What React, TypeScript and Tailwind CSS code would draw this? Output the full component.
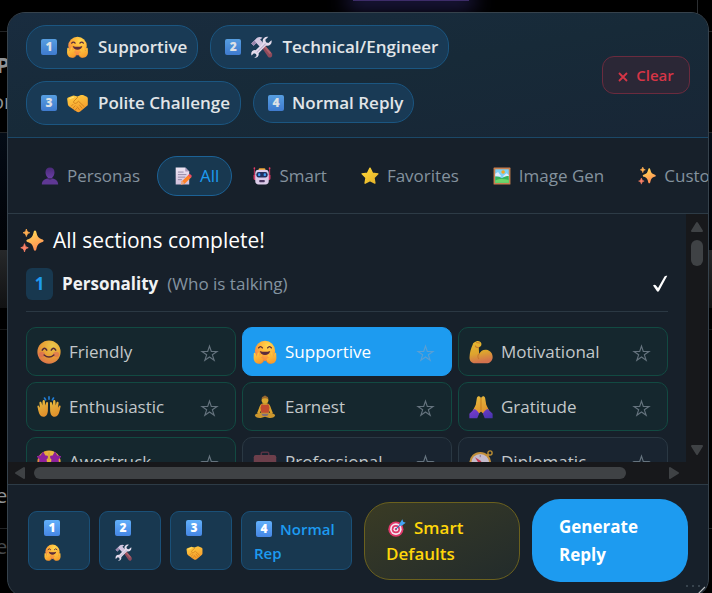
import type { ReactNode } from 'react';

/* ---------- shared gradients for the emoji drawings ---------- */

function Gradients() {
  return (
    <svg width="0" height="0" className="absolute" aria-hidden="true">
      <defs>
        <radialGradient id="face" cx="0.65" cy="0.25" r="0.9">
          <stop offset="0" stopColor="#ffd94f" />
          <stop offset="0.5" stopColor="#ffae35" />
          <stop offset="1" stopColor="#ee6f55" />
        </radialGradient>
        <linearGradient id="hand" x1="0" y1="0" x2="0.4" y2="1">
          <stop offset="0" stopColor="#ffd143" />
          <stop offset="1" stopColor="#f79c2c" />
        </linearGradient>
        <linearGradient id="spark" x1="0.2" y1="0" x2="0.6" y2="1">
          <stop offset="0" stopColor="#ffdd55" />
          <stop offset="1" stopColor="#ff8a55" />
        </linearGradient>
        <linearGradient id="gold" x1="0" y1="0" x2="1" y2="1">
          <stop offset="0" stopColor="#ffd83a" />
          <stop offset="1" stopColor="#e5b127" />
        </linearGradient>
        <linearGradient id="purple" x1="0" y1="0" x2="0" y2="1">
          <stop offset="0" stopColor="#4a2a78" />
          <stop offset="1" stopColor="#6a3fa5" />
        </linearGradient>
        <linearGradient id="sleeve" x1="0" y1="0" x2="1" y2="1">
          <stop offset="0" stopColor="#8a3fe0" />
          <stop offset="1" stopColor="#4b36bd" />
        </linearGradient>
        <linearGradient id="paper" x1="0" y1="0" x2="0" y2="1">
          <stop offset="0" stopColor="#efe6f3" />
          <stop offset="1" stopColor="#cfc0dc" />
        </linearGradient>
        <linearGradient id="skin" x1="0" y1="0" x2="0.2" y2="1">
          <stop offset="0" stopColor="#ffcb30" />
          <stop offset="0.6" stopColor="#f3b22f" />
          <stop offset="1" stopColor="#e87b52" />
        </linearGradient>
      </defs>
    </svg>
  );
}

type IconProps = { className: string };

function Emoji({ className, children }: IconProps & { children: ReactNode }) {
  return (
    <svg viewBox="0 0 32 32" className={`shrink-0 ${className}`} aria-hidden="true">
      {children}
    </svg>
  );
}

function Hugging({ className }: IconProps) {
  return (
    <Emoji className={className}>
      <circle cx="16" cy="14.5" r="13.5" fill="url(#face)" />
      <path d="M7.5 10.5q2.5-3.5 5 0M19.5 10.5q2.5-3.5 5 0" stroke="#5a2b3c" strokeWidth="1.8" fill="none" strokeLinecap="round" />
      <path d="M9 14.5q7 2.5 14 0q-1.500 5.500-7 5.500t-7-5.500z" fill="#5a2b3c" />
      <path d="M1 19c0-2.500 2-2.500 2.600-.8L5 22l1-4c.5-2 2.800-1.400 2.600.5L8.300 21l2-1.500c1.700-1 3 .7 2 2L10.500 24c1.500 0 3.500.5 3.500 3 0 3-3 4.500-6 4.500C3 31.500 1 28 .8 24z" fill="url(#hand)" />
      <path d="M31 19c0-2.500-2-2.500-2.600-.8L27 22l-1-4c-.5-2-2.800-1.400-2.600.5l.3 2.500-2-1.500c-1.700-1-3 .7-2 2l1.800 2.500c-1.500 0-3.500.5-3.500 3 0 3 3 4.500 6 4.500 5 0 7-3.500 7.200-7.500z" fill="url(#hand)" />
      <path d="M14 27c0 3-3 4.500-6 4.500M18 27c0 3 3 4.500 6 4.500" stroke="#e98332" strokeWidth="1" fill="none" />
    </Emoji>
  );
}

function Tools({ className }: IconProps) {
  return (
    <Emoji className={className}>
      <path d="M14 13l3.500-3.500L31 25c1 2 .8 4.500-1 6-2 .8-3.500.3-4.500-1z" fill="#8e4a5b" />
      <path d="M16 12l2-2 12 14.500-2 2z" fill="#b0636c" />
      <path d="M1 11l8.500-8.500C12 1 15 1 17.500 2.500L14 5l5 5.500-5.500 5L8.500 10 4.500 14z" fill="#d3c6e0" />
      <path d="M1 11l3.500 3 4-4-2.500-3.500z" fill="#9a86ad" />
      <path d="M30.500 6l-4.500 4-3.500-1-1-3.500L26 1.200c-4-1.200-8.300 1.600-8.300 6 0 1 .2 2 .6 2.800L7.500 20.600c-3-.8-6.500 1.400-6.500 5.200 0 1 .2 1.800.5 2.500L5 25l3 1 .8 3L5.500 31.500c4.200 1 7.400-2.700 6.300-6.500L22.300 14c5.700 1.500 9.700-3.200 8.200-8z" fill="#e4dcec" />
      <path d="M9 24L22 11" stroke="#b9a9ca" strokeWidth="1.500" />
    </Emoji>
  );
}

function Handshake({ className }: IconProps) {
  return (
    <Emoji className={className}>
      <path d="M1 10q0-1.500 1.500-2L9 5.500q1.500-.5 3 0l4 1 5-2q1.500-.5 3 0l5.500 2.500Q31 8 31 9.500V18q0 1.500-1.500 2.500L20 28.500c-2 1.500-3.500 1.500-5.500 0L4 21q-1.500-1-2-3z" fill="url(#hand)" />
      <path d="M16.500 7.500l-6 6c-1 2.500 2 4 4 2.500l3-2.500 8.500 8" stroke="#cf801d" strokeWidth="1.400" fill="none" />
      <path d="M19 19l3.500 4.500M15.500 21.500l3.500 4.500M7 20.500l2.500-2.500M9.500 23.500l3-3.500M12.500 26.500l2.500-3" stroke="#cf801d" strokeWidth="1.300" fill="none" strokeLinecap="round" />
      <path d="M10 7.500l-5 2" stroke="#ffe680" strokeWidth="1.500" strokeLinecap="round" />
    </Emoji>
  );
}

function Bust({ className }: IconProps) {
  return (
    <Emoji className={className}>
      <path d="M16 1c5 0 8 3.500 8 8.500 0 4-1.500 7.500-4 9v2h-8v-2c-2.500-1.500-4-5-4-9C8 4.500 11 1 16 1z" fill="url(#purple)" />
      <path d="M1.500 31c0-6 4-9.500 10-10.500 2.500 1.800 6.500 1.800 9 0 6 1 10 4.500 10 10.500z" fill="#5f3894" />
      <path d="M12 20.300c2.500 1.700 5.500 1.700 8 0" stroke="#432468" strokeWidth="1.500" fill="none" />
    </Emoji>
  );
}

function Memo({ className }: IconProps) {
  return (
    <Emoji className={className}>
      <path d="M3 1h17l7 7v23H3z" fill="url(#paper)" />
      <path d="M20 1l7 7h-7z" fill="#a998bb" />
      <path d="M7 9h10M7 13.500h15M7 18h13M7 22.500h7" stroke="#8d82a0" strokeWidth="1.600" />
      <path d="M26.500 13.500l4.500 4.500L18.500 30l-5.500 1 1-5.500z" fill="#ff8228" />
      <path d="M28 12l4 4-2.500 3-4.500-4.500z" fill="#ef4d64" />
      <path d="M14.500 24.500l4.500 4.700L12 31.500z" fill="#e8a884" />
    </Emoji>
  );
}

function Robot({ className }: IconProps) {
  return (
    <Emoji className={className}>
      <path d="M2.500 2v18M29.500 2v18" stroke="#b52a52" strokeWidth="2" />
      <circle cx="2.500" cy="2" r="1.500" fill="#e23a63" />
      <circle cx="29.500" cy="2" r="1.500" fill="#e23a63" />
      <rect x="10" y="2" width="12" height="5" rx="2" fill="#f0a52c" />
      <path d="M1 14h5v9H3q-2 0-2-2zM31 14h-5v9h3q2 0 2-2z" fill="#d53a65" />
      <rect x="4" y="5" width="24" height="26" rx="6" fill="#dccbe8" />
      <rect x="6" y="9" width="20" height="9.500" rx="4" fill="#22305e" />
      <rect x="9" y="11" width="4" height="5" rx="1.500" fill="#3d9df2" />
      <rect x="19" y="11" width="4" height="5" rx="1.500" fill="#3d9df2" />
      <rect x="11" y="23" width="10" height="4" rx="1.500" fill="#4b3560" />
    </Emoji>
  );
}

function GoldStar({ className }: IconProps) {
  return (
    <Emoji className={className}>
      <path d="M16 2l4.300 8.800 9.700 1.400-7 6.800 1.700 9.700L16 24.100l-8.700 4.600L9 19l-7-6.800 9.700-1.400z" fill="url(#gold)" stroke="url(#gold)" strokeWidth="2.500" strokeLinejoin="round" />
    </Emoji>
  );
}

function Picture({ className }: IconProps) {
  return (
    <Emoji className={className}>
      <rect x="1" y="1" width="30" height="30" rx="1" fill="#c97f4e" />
      <rect x="4" y="4" width="24" height="24" fill="#7ed0f5" />
      <path d="M4 12l5-3 6 8H4zM17 17l7-6 4 3v5z" fill="#dfeaff" />
      <circle cx="18" cy="9" r="3.200" fill="#f5a623" />
      <path d="M4 17c5-1 9 1 12 3 4-3 8-4 12-4v12H4z" fill="#35b45a" />
      <path d="M4 24c8-4 16-3 24-1v5H4z" fill="#6dd66a" />
    </Emoji>
  );
}

function Sparkles({ className }: IconProps) {
  return (
    <Emoji className={className}>
      <path d="M20 2c1.300 0 1.500 1 2 3 1.200 5 2.500 7 7 8.500 1.800.6 2.500 1 2.500 2s-.7 1.400-2.500 2c-4.500 1.500-5.800 3.500-7 8.500-.5 2-.7 3-2 3s-1.500-1-2-3c-1.200-5-2.500-7-7-8.500-1.800-.6-2.500-1-2.500-2s.7-1.400 2.500-2c4.500-1.500 5.800-3.500 7-8.500.5-2 .7-3 2-3z" fill="url(#spark)" />
      <path d="M8.500 0c.8 3 1.500 4 4.500 5-3 1-3.700 2-4.500 5C7.700 7 7 6 4 5c3-1 3.700-2 4.500-5z" fill="#ffae52" stroke="#ffae52" strokeWidth="1" strokeLinejoin="round" />
      <path d="M6 19.500c.9 3.500 1.800 4.500 5 5.500-3.200 1-4.100 2-5 5.500-.9-3.500-1.800-4.500-5-5.500 3.200-1 4.100-2 5-5.500z" fill="#fb8268" stroke="#fb8268" strokeWidth="1" strokeLinejoin="round" />
    </Emoji>
  );
}

function Smile({ className }: IconProps) {
  return (
    <Emoji className={className}>
      <circle cx="16" cy="16" r="15.500" fill="url(#face)" />
      <ellipse cx="6.500" cy="19" rx="4" ry="3.500" fill="#ee5f66" opacity="0.5" />
      <ellipse cx="25.500" cy="19" rx="4" ry="3.500" fill="#ee5f66" opacity="0.500" />
      <path d="M7 13.500q3-5 6 0M19 13.500q3-5 6 0M9.500 20q6.500 5.500 13 0" stroke="#5a2b3c" strokeWidth="2" fill="none" strokeLinecap="round" />
    </Emoji>
  );
}

function Biceps({ className }: IconProps) {
  return (
    <Emoji className={className}>
      <path d="M5 6c0-2 2-3.500 5-4.500 3-.8 6 .5 6.500 3 .5 2.800-1 4.500-3.500 5l.5 9C15.500 14.500 19 12.500 23 13c5.500.7 9 5.500 8.500 10.500-.5 4.500-4 7.500-8 7.500H8c-5 0-7.500-3.500-7.300-8C1 16.500 2.500 11 5 6z" fill="url(#skin)" />
      <path d="M13 10c-2.500.3-4-.5-4.500-2M13.500 18.500c-2 2-2 4.500-.5 6.500" stroke="#d9822e" strokeWidth="1.400" fill="none" strokeLinecap="round" />
      <path d="M10 3.500l4 .5" stroke="#d9822e" strokeWidth="1.300" strokeLinecap="round" />
    </Emoji>
  );
}

function RaisedHands({ className }: IconProps) {
  return (
    <Emoji className={className}>
      <path d="M10 4l1.500 2.500M16 2.500V5.500M22 4l-1.500 2.500" stroke="#2387e8" strokeWidth="2.200" strokeLinecap="round" />
      <path d="M1 17c-1.500-2.500 1-4 2-1.800L4 17l-.8-6.500c0-2 2.500-2.300 3 0L7 14l.5-6c.3-2 3-1.700 3 .3L11 14l1-3.500c.7-1.800 3-1 2.700 1L14.500 21c-.3 4.500-2 8-6 8C3.500 29 2 23 1 17z" fill="url(#hand)" />
      <path d="M31 17c1.500-2.500-1-4-2-1.800L28 17l.8-6.500c0-2-2.500-2.300-3 0L25 14l-.5-6c-.3-2-3-1.700-3 .3L21 14l-1-3.500c-.7-1.800-3-1-2.700 1l.2 9.500c.3 4.500 2 8 6 8 5 0 6.500-6 7.500-12z" fill="url(#hand)" />
    </Emoji>
  );
}

function Lotus({ className }: IconProps) {
  return (
    <Emoji className={className}>
      <path d="M10 13c2-2.500 10-2.500 12 0 2 3 3 8 4.500 11l-3 1.500L21 20v6H11v-6l-2.500 5.500-3-1.500C7 21 8 16 10 13z" fill="#efb02d" />
      <path d="M11.500 12c3 1.500 6 1.500 9 0l1.500 5-1.500 8h-9L10 17z" fill="#d5502f" />
      <circle cx="16" cy="7" r="4.500" fill="#efb42f" />
      <path d="M11.500 5.500c0-2.500 1.500-3.500 3-3.700.5-1.300 2.500-1.300 3 0 1.500.2 3 1.200 3 3.700-3-1.500-6-1.500-9 0z" fill="#a8702f" />
      <path d="M2.500 27c0-2 3.500-3 8-3.500h11c4.500.5 8 1.500 8 3.500 0 2.500-4 4-8 3.500L16 29l-5.500 1.500c-4 .5-8-1-8-3.500z" fill="#dfa32e" />
      <path d="M11 25h10l-2 3h-6z" fill="#8c7583" />
    </Emoji>
  );
}

function Pray({ className }: IconProps) {
  return (
    <Emoji className={className}>
      <path d="M10.500 4c.5-3 3.500-3 4.500-1.500L16 4l1-1.500C18 1 21 1 21.500 4l1.500 9 4 8-6 6-5-5-5 5-6-6 4-8z" fill="url(#hand)" />
      <path d="M16 4v17" stroke="#d98620" strokeWidth="1.400" />
      <path d="M.5 31v-6L7 18.500c3 1 5.500 3.500 6.500 6.500L11 31zM31.500 31v-6L25 18.500c-3 1-5.500 3.500-6.500 6.500L21 31z" fill="url(#sleeve)" />
    </Emoji>
  );
}

function StarStruck({ className }: IconProps) {
  return (
    <Emoji className={className}>
      <circle cx="16" cy="16" r="15.500" fill="url(#face)" />
      <path d="M8 3.500l2.300 4.300 5 1-3.500 3.700.7 5L8 15.300l-4.500 2.200.7-5L.7 8.800l5-1zM24 3.500l2.300 4.300 5 1-3.500 3.700.7 5-4.500-2.200-4.500 2.200.7-5-3.500-3.700 5-1z" fill="#9b21a8" stroke="#9b21a8" strokeWidth="1.800" strokeLinejoin="round" />
      <path d="M16 3v11" stroke="#f0b63c" strokeWidth="3" />
      <path d="M8 19.500q8 2.500 16 0q-1.500 7-8 7t-8-7z" fill="#fff" stroke="#5a2b3c" strokeWidth="1" />
    </Emoji>
  );
}

function Briefcase({ className }: IconProps) {
  return (
    <Emoji className={className}>
      <path d="M11 7V4.500Q11 3 12.500 3h7Q21 3 21 4.500V7" stroke="#5f3446" strokeWidth="2" fill="none" />
      <rect x="1" y="6.500" width="30" height="23" rx="3" fill="#77424f" />
      <path d="M1 21h30v3H1z" fill="#5f3446" />
      <rect x="13" y="20" width="6" height="5" rx="1" fill="#d9a441" />
    </Emoji>
  );
}

function Compass({ className }: IconProps) {
  return (
    <Emoji className={className}>
      <circle cx="28" cy="4" r="2.800" stroke="#cf9b35" strokeWidth="1.800" fill="none" />
      <path d="M23 9l3-3" stroke="#cf9b35" strokeWidth="3" />
      <circle cx="15" cy="17" r="14.500" fill="#d69c3c" />
      <circle cx="15" cy="17" r="11.800" fill="#d6cbdc" />
      <path d="M8 9.500l8.500 5.500-3 3.500z" fill="#d93a55" />
      <path d="M22 24.500L13.500 19l3-3.500z" fill="#6d5b86" />
      <path d="M15 6.500v3M15 24.500v3M4.500 17h3M22.500 17h3" stroke="#8d7ba0" strokeWidth="1.300" />
    </Emoji>
  );
}

function Dart({ className }: IconProps) {
  return (
    <Emoji className={className}>
      <circle cx="14" cy="18" r="13.500" fill="#e0386a" />
      <circle cx="14" cy="18" r="10.300" fill="#f4e6f2" />
      <circle cx="14" cy="18" r="7.300" fill="#e0386a" />
      <circle cx="14" cy="18" r="4.400" fill="#f4e6f2" />
      <circle cx="14" cy="18" r="2" fill="#e0386a" />
      <path d="M14 18L24 8" stroke="#2c6fb3" strokeWidth="1.800" />
      <path d="M20.500 8l5-7.500 1.500 4.500 4.500 1.500-7 5.500h-4z" fill="#42a5f5" />
    </Emoji>
  );
}

/* ---------- small shared parts ---------- */

function Keycap({ digit }: { digit: string }) {
  return (
    <span className="inline-flex size-4 shrink-0 items-center justify-center rounded-[2px] bg-linear-to-b from-[#62b0fa] to-[#4686e4] text-[12px] leading-none font-extrabold text-white">
      {digit}
    </span>
  );
}

type Icon = (props: IconProps) => ReactNode;

const chips: { digit: string; label: string; icon?: Icon }[] = [
  { digit: '1', label: 'Supportive', icon: Hugging },
  { digit: '2', label: 'Technical/Engineer', icon: Tools },
  { digit: '3', label: 'Polite Challenge', icon: Handshake },
  { digit: '4', label: 'Normal Reply' },
];

const tabs: { label: string; icon: Icon }[] = [
  { label: 'Personas', icon: Bust },
  { label: 'All', icon: Memo },
  { label: 'Smart', icon: Robot },
  { label: 'Favorites', icon: GoldStar },
  { label: 'Image Gen', icon: Picture },
  { label: 'Custom', icon: Sparkles },
];

type Tone = 'recommended' | 'selected' | 'plain';

const personalities: { label: string; icon: Icon; tone: Tone }[] = [
  { label: 'Friendly', icon: Smile, tone: 'recommended' },
  { label: 'Supportive', icon: Hugging, tone: 'selected' },
  { label: 'Motivational', icon: Biceps, tone: 'recommended' },
  { label: 'Enthusiastic', icon: RaisedHands, tone: 'recommended' },
  { label: 'Earnest', icon: Lotus, tone: 'recommended' },
  { label: 'Gratitude', icon: Pray, tone: 'recommended' },
  { label: 'Awestruck', icon: StarStruck, tone: 'recommended' },
  { label: 'Professional', icon: Briefcase, tone: 'plain' },
  { label: 'Diplomatic', icon: Compass, tone: 'plain' },
];

const tones: Record<Tone, string> = {
  recommended: 'border-[#124a42] bg-[#15272e] text-[#c3c8ca]',
  selected: 'border-[#1d9bf0] bg-[#1d9bf0] text-white',
  plain: 'border-[#2a3843] bg-[#192430] text-[#c3c8ca]',
};

/* ---------- sections ---------- */

function SelectionBar() {
  return (
    <header className="flex items-center justify-between border-b border-[#1b4868] bg-linear-to-br from-[#192c3f] via-[#172a38] to-[#182636] px-[18px] py-3">
      <div className="flex flex-1 flex-wrap items-center gap-3">
        {chips.map(({ digit, label, icon: ChipIcon }) => (
          <button
            key={label}
            type="button"
            className={`flex items-center gap-2 rounded-[20px] border border-[#1b5681] bg-[#193a55] pr-[10px] pl-[14px] text-[17px] font-semibold text-[#e1e5e8] ${ChipIcon ? 'h-11' : 'h-10'}`}
          >
            <span className="flex opacity-85">
              <Keycap digit={digit} />
            </span>
            {ChipIcon && <ChipIcon className="h-[22px] w-[25px]" />}
            {label}
          </button>
        ))}
      </div>
      <button
        type="button"
        className="flex h-[38px] w-[88px] items-center justify-center gap-2 rounded-xl border border-[#6b2b3e] bg-[#2b2736] text-[15px] font-semibold text-[#d63546]"
      >
        <svg viewBox="0 0 10 10" className="mt-1 size-[10px]" aria-hidden="true">
          <path d="M1 1l8 8M9 1L1 9" stroke="currentColor" strokeWidth="1.800" />
        </svg>
        Clear
      </button>
    </header>
  );
}

function Tabs() {
  return (
    <nav className="flex gap-1 overflow-hidden border-b border-[#2d3b46] px-4 pt-[18px] pb-[17px]">
      {tabs.map(({ label, icon: TabIcon }) => (
        <button
          key={label}
          type="button"
          className={`flex h-10 shrink-0 items-center gap-2 rounded-[20px] border pr-3 pl-4 text-[17px] font-medium ${
            label === 'All' ? 'border-[#1c6296] bg-[#183850] text-[#1d9bf0]' : 'border-transparent text-[#84929e]'
          }`}
        >
          <TabIcon className="size-[18px]" />
          {label}
        </button>
      ))}
    </nav>
  );
}

function PersonalityCard({ label, icon: CardIcon, tone }: { label: string; icon: Icon; tone: Tone }) {
  return (
    <div className={`flex h-[49px] items-center rounded-[10px] border pr-4 pl-[10px] ${tones[tone]}`}>
      <button type="button" className="flex flex-1 items-center gap-2 text-left text-[17px]">
        <CardIcon className={tone === 'selected' ? 'size-6' : 'size-6 opacity-90'} />
        {label}
      </button>
      <button type="button" aria-label={`Add ${label} to favorites`} className={tone === 'selected' ? 'text-[#5a9fd3]' : 'text-[#65737e]'}>
        <svg viewBox="0 0 20 20" className="mt-1 size-[19px]" aria-hidden="true">
          <path d="M10 2.200l1.900 5.700h6l-4.900 3.500 1.900 5.700-4.900-3.500-4.900 3.500L7 11.400 2.100 7.900h6z" fill="none" stroke="currentColor" strokeWidth="1.200" />
        </svg>
      </button>
    </div>
  );
}

function Arrow({ className }: IconProps) {
  return (
    <svg viewBox="0 0 14 12" className={`h-3 w-[14px] shrink-0 ${className}`} aria-hidden="true">
      <path d="M7 2l5 8H2z" fill="#3f4245" stroke="#3f4245" strokeWidth="2" strokeLinejoin="round" />
    </svg>
  );
}

function Sections() {
  return (
    <main className="flex flex-col bg-[#17181b]">
      <div className="flex h-[248px]">
        <div className="min-w-0 flex-1 overflow-hidden bg-[#17202a]">
          <h2 className="flex h-[54px] items-center gap-[9px] pl-3 text-[21px] text-white">
            <Sparkles className="size-6" />
            All sections complete!
          </h2>
          <section className="px-[18px]">
            <div className="mb-[15px] flex h-11 items-start gap-[9px] border-b border-[#2b3843]">
              <span className="flex h-8 w-[27px] items-center justify-center rounded-md bg-[#18384f] text-[17px] font-bold text-[#1d9bf0]">1</span>
              <h3 className="text-[17px] leading-8 font-bold text-[#f0f2f3]">Personality</h3>
              <span className="flex-1 text-[17px] leading-8 text-[#8493a0]">(Who is talking)</span>
              <svg viewBox="0 0 16 18" className="mt-[7px] h-[18px] w-4" aria-label="Complete">
                <path d="M1 10.500c1-1 2-1.200 2.800-.3L6 13 12.500 1.500c.5-.8 2-1 2.800-.8L7 16c-.6 1-1.600 1-2.200 0z" fill="#fff" />
              </svg>
            </div>
            <div className="grid grid-cols-3 gap-[6px]">
              {personalities.map((p) => (
                <PersonalityCard key={p.label} {...p} />
              ))}
            </div>
          </section>
        </div>
        <div className="flex w-[22px] flex-col items-center pt-[7px] pb-[6px]">
          <Arrow className="mb-[7px]" />
          <div className="h-[26px] w-3 rounded-full bg-[#3f4245]" />
          <Arrow className="mt-auto rotate-180" />
        </div>
      </div>
      <div className="flex h-[22px] items-center pr-[27px] pl-[5px]">
        <Arrow className="-rotate-90" />
        <div className="mr-[41px] ml-[7px] h-3 flex-1 rounded-full bg-[#3f4245]" />
        <Arrow className="rotate-90" />
      </div>
    </main>
  );
}

const presets: { digit: string; icon: Icon; name: string }[] = [
  { digit: '1', icon: Hugging, name: 'Supportive' },
  { digit: '2', icon: Tools, name: 'Technical/Engineer' },
  { digit: '3', icon: Handshake, name: 'Polite Challenge' },
];

function Footer() {
  return (
    <footer className="flex items-center gap-3 border-t border-[#2d3b46] px-5 py-[14px]">
      <div className="flex flex-1 gap-[9px]">
        {presets.map(({ digit, icon: PresetIcon, name }) => (
          <button
            key={digit}
            type="button"
            aria-label={name}
            className="flex h-[59px] w-[62px] flex-col items-start justify-center gap-2 rounded-[9px] border border-[#1a5078] bg-[#183850] pl-[15px]"
          >
            <Keycap digit={digit} />
            <PresetIcon className="size-[17px]" />
          </button>
        ))}
        <button
          type="button"
          className="h-[59px] flex-1 rounded-[9px] border border-[#1a5078] bg-[#183850] pr-2 pl-3 text-left text-[15px] leading-6 font-semibold text-[#1d9bf0]"
        >
          <span className="flex items-center gap-2 pl-[2px]">
            <Keycap digit="4" />
            Normal
          </span>
          Rep
        </button>
      </div>
      <button
        type="button"
        className="h-[78px] w-[156px] rounded-[26px] border border-[#6b611e] bg-linear-to-br from-[#3a3b24] to-[#222b2b] pl-[21px] text-left text-[17px] leading-[26px] font-semibold text-[#ffd60a]"
      >
        <span className="flex items-center gap-2 pl-[2px]">
          <Dart className="size-[18px]" />
          Smart
        </span>
        Defaults
      </button>
      <button
        type="button"
        className="h-[83px] w-[156px] rounded-[28px] bg-[#1d9bf0] pr-10 pl-[27px] text-left text-[17px] leading-7 font-bold text-white"
      >
        Generate Reply
      </button>
    </footer>
  );
}

/* Page that stays partly visible around the dialog. */
function Backdrop() {
  return (
    <div className="absolute inset-0 flex flex-col overflow-hidden text-[#8f9295]" aria-hidden="true">
      <div className="flex h-8 justify-end border-b border-[#222426] pr-[14px]">
        <div className="mr-[228px] h-px w-[116px] bg-[#3d2c68] shadow-[0_0_20px_6px_#2a2560]" />
        <div className="w-px bg-[#2c2f32]" />
      </div>
      <p className="mt-4 -ml-1 text-[22px] leading-8 font-bold">P</p>
      <p className="mt-1 -ml-2 text-[20px] leading-9">or</p>
      <div className="mt-3 h-[118px] border-t border-[#222426] bg-linear-to-b from-[#040c16] to-[#010306]" />
      <div className="h-[58px] bg-linear-to-b from-[#26282a] to-[#111213]" />
      <div className="h-[22px] border-b border-[#151617]" />
      <p className="mt-[148px] -ml-1 text-[20px] leading-9">e</p>
      <div className="mt-[14px] h-px bg-[#222426]" />
      <p className="-ml-1 text-[20px] leading-9 text-[#45484b]">e</p>
    </div>
  );
}

export default function App() {
  return (
    <div className="relative h-screen overflow-hidden bg-black font-['Open_Sans','Noto_Sans',sans-serif]">
      <Gradients />
      <Backdrop />
      <div className="relative mt-3 mr-[3px] ml-[7px] overflow-hidden rounded-[18px] border border-[#36424c] bg-[#17202a]">
        <SelectionBar />
        <Tabs />
        <Sections />
        <Footer />
        <svg viewBox="0 0 24 12" className="absolute right-0 bottom-0 h-3 w-6" aria-hidden="true">
          <path d="M2 2h2M8 2h2M14 2h2" stroke="#37434d" strokeWidth="2" />
          <path d="M12 12L21 3M17 12l4-4" stroke="#b9bdc0" strokeWidth="1.200" />
        </svg>
      </div>
    </div>
  );
}
